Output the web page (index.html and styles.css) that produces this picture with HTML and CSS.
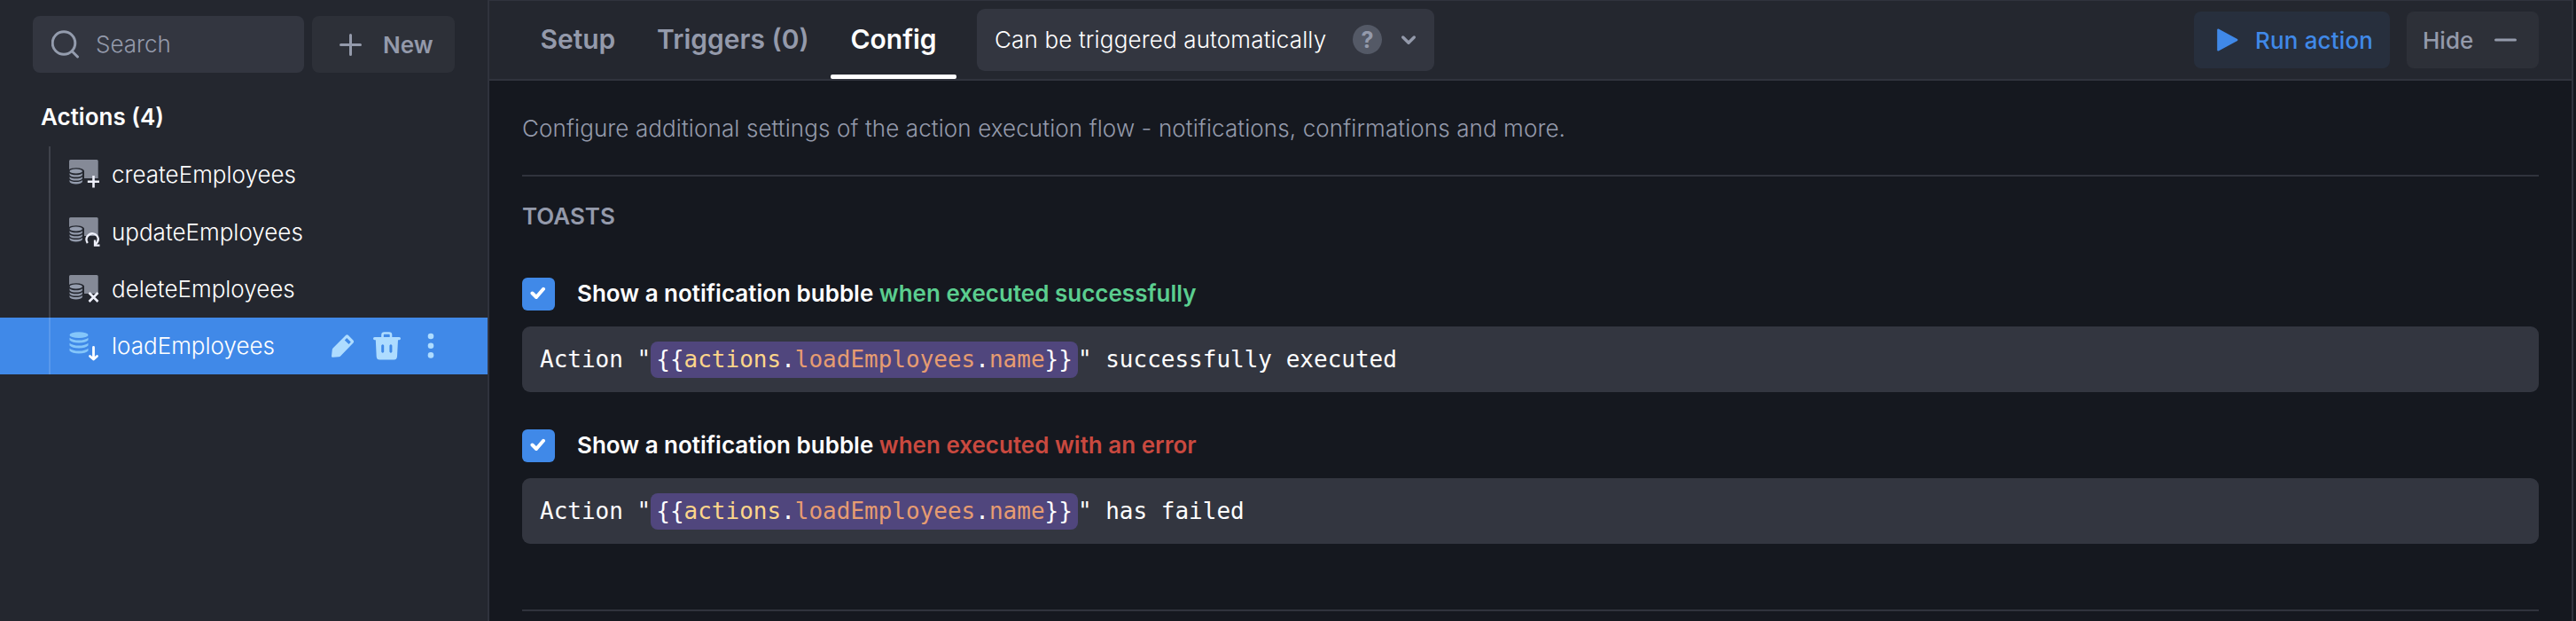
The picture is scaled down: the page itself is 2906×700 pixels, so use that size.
FILE: index.html
```html
<!DOCTYPE html>
<html lang="en">
<head>
<meta charset="utf-8">
<title>Actions</title>
<link rel="stylesheet" href="styles.css">
</head>
<body>
<svg class="defs" width="0" height="0">
  <defs>
    <g id="table">
      <path d="M1.500 0H31.200Q32.700 0 32.700 1.500V21H17V12.500Q16 9.500 8 9.200Q2 9.300 0 11V1.500Q0 0 1.500 0Z" fill="#858a97"/>
      <g fill="#949cad">
        <ellipse cx="7.700" cy="13" rx="7.200" ry="2.400"/>
        <path id="band" d="M.5 15.300Q2.500 17.300 7.700 17.300T14.900 15.300V17.300Q13.500 19.600 7.700 19.600T.5 17.300Z"/>
        <use href="#band" y="3.900"/>
        <use href="#band" y="7.800"/>
      </g>
    </g>
  </defs>
</svg>
<div class="app">
  <aside class="sidebar">
    <div class="tools">
      <div class="search">
        <svg width="32" height="32" viewBox="0 0 32 32" fill="none" stroke="#949cad" stroke-width="3" stroke-linecap="round"><circle cx="14" cy="14.500" r="12.800"/><path d="M23.500 24L29.500 30"/></svg>
        <span class="t">Search</span>
      </div>
      <div class="new">
        <svg width="25" height="25" viewBox="0 0 25 25" stroke="#949aab" stroke-width="3" stroke-linecap="round"><path d="M12.500 1.500V23.500M1.500 12.500H23.500"/></svg>
        <span class="t drop">New</span>
      </div>
    </div>
    <h2 class="group">Actions (4)</h2>
    <ul class="tree">
      <li class="row">
        <svg width="36" height="34" viewBox="0 0 36 34"><use href="#table"/><path d="M27.500 18V31.500M20.800 24.700H34" stroke="#eef0fa" stroke-width="2.600"/></svg>
        <span class="t">createEmployees</span>
      </li>
      <li class="row tall">
        <svg width="36" height="34" viewBox="0 0 36 34"><use href="#table"/><path d="M20.800 29Q18.200 25 20.500 21.500Q23 17.800 27 18.300Q32 19.300 32.800 24Q33 27.500 29.500 30.500M29 25.500V31.700H34.500" fill="none" stroke="#eef0fa" stroke-width="2.300"/></svg>
        <span class="t">updateEmployees</span>
      </li>
      <li class="row">
        <svg class="low" width="36" height="34" viewBox="0 0 36 34"><use href="#table"/><path d="M22.500 20L32.500 30M32.500 20L22.500 30" stroke="#eef0fa" stroke-width="2.600"/></svg>
        <span class="t">deleteEmployees</span>
      </li>
      <li class="row selected">
        <svg class="low" width="36" height="34" viewBox="0 0 36 34"><g fill="#84c6fa"><ellipse cx="11" cy="3.700" rx="10.500" ry="3.400"/><path id="wide" d="M.5 6.800Q4 9.600 11 9.600T21.500 6.800V9.600Q18.500 12.600 11 12.600T.5 9.600Z"/><use href="#wide" y="6"/><use href="#wide" y="12"/></g><path d="M27.500 17.500V31M23.500 27.500L27.500 31L31.500 27.500" fill="none" stroke="#fff" stroke-width="2.800" stroke-linecap="round" stroke-linejoin="round"/></svg>
        <span class="t">loadEmployees</span>
        <div class="row-actions">
          <svg width="26" height="26" viewBox="0 0 26 26" fill="#aedcff"><path fill-rule="evenodd" d="M0 24.500L.8 17Q1 16 2 15L16 1Q17.500-.4 19 1L24.400 6.500Q25.800 8 24.500 9.500L10.500 24Q9.500 25.200 8 25.300L1.500 25.700Q0 25.800 0 24.500ZM17.200 4L14.800 6.500L19.500 11L21.800 8.600Z"/></svg>
          <svg width="31" height="32" viewBox="0 0 31 32" fill="#aedcff"><path d="M10.500 7V3.500Q10.500 1.500 12.500 1.500H18Q20 1.500 20 3.500V7" fill="none" stroke="#aedcff" stroke-width="2.600"/><rect y="6" width="31" height="3.200" rx="1.600"/><path fill-rule="evenodd" d="M2.800 9H28L27 28Q26.500 31.500 23.500 31.500H7.300Q4 31.500 3.700 28ZM9.200 15.500V22.500Q10.700 25 12.200 22.500V15.500Q10.700 13 9.200 15.500ZM18.400 15.500V22.500Q19.900 25 21.400 22.500V15.500Q19.900 13 18.400 15.500Z"/></svg>
          <svg class="dots" width="8" height="30" viewBox="0 0 8 30" fill="#aedcff"><circle cx="4" cy="4" r="3.300"/><circle cx="4" cy="14.700" r="3.300"/><circle cx="4" cy="25.400" r="3.300"/></svg>
        </div>
      </li>
    </ul>
  </aside>
  <main class="panel">
    <header class="bar">
      <nav class="tabs">
        <div class="tab">Setup</div>
        <div class="tab">Triggers (0)</div>
        <div class="tab active">Config</div>
      </nav>
      <div class="select">
        <span class="t">Can be triggered automatically</span>
        <span class="help">?</span>
        <svg width="18" height="12" viewBox="0 0 18 12" fill="none" stroke="#949aab" stroke-width="3.400" stroke-linecap="round" stroke-linejoin="round"><path d="M2.700 3L9 9.300L15.300 3"/></svg>
      </div>
      <div class="buttons">
        <div class="run">
          <svg width="24" height="26" viewBox="0 0 24 26" fill="#4089e8" stroke="#4089e8" stroke-width="2" stroke-linejoin="round"><path d="M1.200 1.500V24.500L22.500 13Z"/></svg>
          <span class="t drop">Run action</span>
        </div>
        <div class="hide">
          <span class="t drop">Hide</span>
          <svg width="25" height="4" viewBox="0 0 25 4" stroke="#949aab" stroke-width="3" stroke-linecap="round"><path d="M1.500 2H23.500"/></svg>
        </div>
      </div>
    </header>
    <section class="content">
      <p class="intro">Configure additional settings of the action execution flow - notifications, confirmations and more.</p>
      <div class="toasts">
        <h3 class="caption">TOASTS</h3>
        <div class="setting">
          <div class="check">
            <span class="box"><svg width="18" height="15" viewBox="0 0 18 15" fill="none" stroke="#fff" stroke-width="4" stroke-linecap="round" stroke-linejoin="round"><path d="M2.500 7.500L7 12L15 2.800"/></svg></span>
            <span class="label">Show a notification bubble <span class="ok">when executed successfully</span></span>
          </div>
          <div class="code">Action "<span class="pill">{{<span class="root">actions</span>.<span class="prop">loadEmployees</span>.<span class="prop">name</span>}}</span>" successfully executed</div>
        </div>
        <div class="setting">
          <div class="check">
            <span class="box"><svg width="18" height="15" viewBox="0 0 18 15" fill="none" stroke="#fff" stroke-width="4" stroke-linecap="round" stroke-linejoin="round"><path d="M2.500 7.500L7 12L15 2.800"/></svg></span>
            <span class="label">Show a notification bubble <span class="err">when executed with an error</span></span>
          </div>
          <div class="code">Action "<span class="pill">{{<span class="root">actions</span>.<span class="prop">loadEmployees</span>.<span class="prop">name</span>}}</span>" has failed</div>
        </div>
      </div>
    </section>
  </main>
</div>
</body>
</html>
```
FILE: styles.css
```css
* { box-sizing: border-box; }
body {
  margin: 0;
  width: 2906px;
  height: 700px;
  overflow: hidden;
  background: #15181f;
  color: #fff;
  font: 300 26px/32px Inter, "Liberation Sans", sans-serif;
}
.defs { position: absolute; }
svg { display: block; flex: none; }
h2, h3, p, ul { margin: 0; padding: 0; list-style: none; font-size: inherit; }
.t { white-space: nowrap; }
.drop { padding-top: 2px; }
.low { margin-top: 2px; }
.app { display: flex; height: 700px; }

/* Sidebar */
.sidebar {
  width: 552px;
  flex: none;
  background: #24272f;
  border-right: 2px solid #30333d;
}
.tools { display: flex; gap: 9px; padding: 18px 0 0 37px; }
.search, .new { display: flex; align-items: center; height: 64px; border-radius: 8px; color: #949aab; }
.search { width: 306px; padding-left: 21px; gap: 18px; background: #333640; }
.new { width: 161px; padding-left: 31px; gap: 24px; background: #2d3038; font-weight: 600; }
.group { height: 83px; padding: 34px 0 0 46px; font-weight: 600; }
.row {
  display: flex;
  align-items: center;
  gap: 12px;
  height: 64px;
  margin-left: 55px;
  padding-left: 21px;
  border-left: 2px solid #3f424b;
}
.row.tall { height: 65px; }
.row.selected {
  margin-left: 0;
  padding-left: 78px;
  border-left: 0;
  background: linear-gradient(90deg, #4089e8 55px, #5998eb 55px, #5998eb 57px, #4089e8 57px);
}
.row-actions { display: flex; align-items: center; gap: 21px; margin-left: auto; padding-right: 60px; }
.dots { margin-left: 9px; }

/* Header bar */
.panel { width: 2351px; flex: none; border-right: 2px solid #30333d; }
.bar { display: flex; height: 91px; border-top: 1px solid #30333d; border-bottom: 2px solid #30333d; background: #24272f; }
.tabs { display: flex; gap: 2px; padding-left: 35px; color: #949aab; font-size: 30px; font-weight: 600; }
.tab { display: flex; height: 88px; align-items: center; padding: 0 22.4px 2px; }
.tab.active { padding-top: 3px; padding-bottom: 0; position: relative; color: #fff; }
.tab.active { padding: 0 22.4px 2px; }
.tab.active::after { content: ""; position: absolute; left: 0; right: 0; bottom: 0; height: 5px; border-radius: 2px; background: #fff; }
.select {
  display: flex;
  align-items: center;
  width: 516px;
  height: 70px;
  margin: 9px 0 0 23px;
  padding: 0 20px;
  border-radius: 9px;
  background: #333640;
  letter-spacing: .15px;
}
.help {
  display: flex;
  align-items: center;
  justify-content: center;
  width: 33px;
  height: 33px;
  margin: 0 21px 1px auto;
  border-radius: 50%;
  background: #545966;
  color: #949aab;
  font-size: 25px;
  font-weight: 700;
}
.buttons { display: flex; gap: 19px; margin: 12px 37px 0 auto; font-weight: 500; }
.run, .hide { display: flex; align-items: center; height: 64px; border-radius: 8px; }
.run { width: 221px; padding-left: 26px; gap: 19px; background: #272f3d; color: #4089e8; letter-spacing: .15px; }
.hide { width: 149px; padding-left: 18px; gap: 24px; background: #2d3038; color: #949aab; }

/* Settings */
.content { padding: 0 37px; }
.intro { height: 108px; padding-top: 38px; border-bottom: 2px solid #30333d; color: #949aab; letter-spacing: .1px; }
.toasts { height: 490px; padding-top: 29px; border-bottom: 2px solid #30333d; }
.caption { height: 85px; color: #949aab; font-weight: 600; }
.setting { height: 171px; }
.check { display: flex; align-items: center; height: 37px; gap: 25px; }
.box {
  display: flex;
  align-items: center;
  justify-content: center;
  width: 37px;
  height: 37px;
  padding: 0 1px 2px 0;
  border-radius: 6px;
  background: #4089e8;
}
.label { margin-bottom: 1px; font-weight: 600; }
.ok { color: #5bce8f; }
.err { color: #c9493f; }
.code {
  height: 74px;
  margin-top: 18px;
  padding-left: 20px;
  border-radius: 9px;
  background: #333640;
  font: 400 26px/74px "DejaVu Sans Mono", monospace;
  white-space: pre;
}
.pill { padding: 5px 6px 6px; border-radius: 8px; background: #50467d; }
.root { color: #fcd58a; }
.prop { color: #e69c71; }
```
